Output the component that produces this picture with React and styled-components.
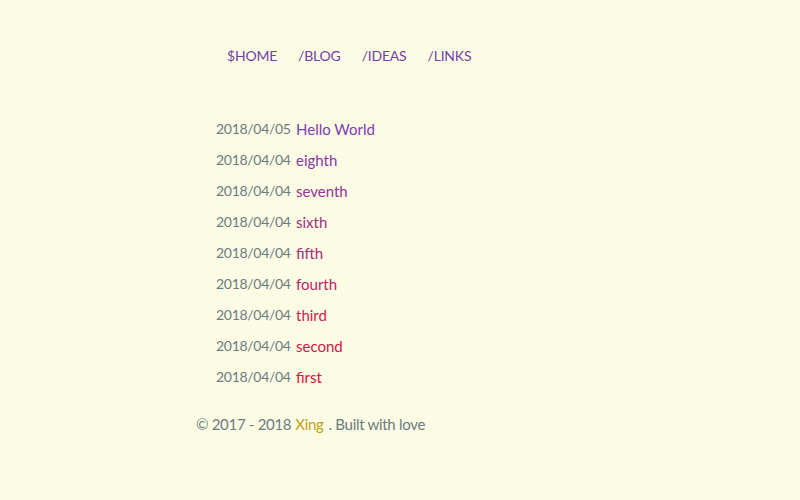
import React from 'react';
import styled, { createGlobalStyle } from 'styled-components';

// Global page styles
const GlobalStyle = createGlobalStyle`
  html, body {
    margin: 0;
    padding: 0;
    background: #fcfbe4;
  }
  body {
    font-family: "Lato", "Open Sans", sans-serif;
    font-size: 14px;
    letter-spacing: -0.3px;
    color: #6b7b82;
  }
`;

const Page = styled.div`
  width: 408px;
  margin: 0 auto;
  padding-top: 45px;
  display: flex;
  flex-direction: column;
`;

const Nav = styled.nav`
  display: flex;
  gap: 21px;
  padding-left: 31px;
  height: 20px;
  align-items: center;
  font-size: 14px;
  letter-spacing: -0.2px;
`;

const NavLink = styled.a`
  color: #7041a8;
  text-decoration: none;
`;

const PostList = styled.ul`
  list-style: none;
  margin: 48px 0 0;
  padding: 0 0 0 20px;
  display: flex;
  flex-direction: column;
`;

const PostRow = styled.li`
  display: flex;
  align-items: center;
  gap: 5px;
  height: 31px;
`;

const PostDate = styled.span`
  color: #6b7b82;
  width: 75px;
  white-space: nowrap;
`;

const PostTitle = styled.a`
  color: ${(p) => p.$color};
  text-decoration: none;
  font-size: 15px;
  letter-spacing: 0;
`;

const Footer = styled.footer`
  margin-top: 22px;
  height: 20px;
  display: flex;
  align-items: center;
  color: #6b7b82;
  white-space: pre;
  font-size: 15px;
  letter-spacing: -0.3px;
`;

const FooterLink = styled.a`
  color: #c29f12;
  text-decoration: none;
  margin: 0 5px 0 4px;
`;

// Posts data
const posts = [
  { date: '2018/04/05', title: 'Hello World' },
  { date: '2018/04/04', title: 'eighth' },
  { date: '2018/04/04', title: 'seventh' },
  { date: '2018/04/04', title: 'sixth' },
  { date: '2018/04/04', title: 'fifth' },
  { date: '2018/04/04', title: 'fourth' },
  { date: '2018/04/04', title: 'third' },
  { date: '2018/04/04', title: 'second' },
  { date: '2018/04/04', title: 'first' },
];

// purple -> crimson
const start = [0x7e, 0x3d, 0xb5];
const end = [0xe0, 0x10, 0x3a];
const colorAt = (i, n) => {
  const t = i / (n - 1);
  const c = start.map((s, k) => Math.round(s + (end[k] - s) * t));
  return `rgb(${c.join(',')})`;
};

const App = () => {
  return (
    <>
      <GlobalStyle />
      <Page>
        <Nav>
          <NavLink href="#">$HOME</NavLink>
          <NavLink href="#">/BLOG</NavLink>
          <NavLink href="#">/IDEAS</NavLink>
          <NavLink href="#">/LINKS</NavLink>
        </Nav>

        <PostList>
          {posts.map((post, i) => (
            <PostRow key={i}>
              <PostDate>{post.date}</PostDate>
              <PostTitle href="#" $color={colorAt(i, posts.length)}>
                {post.title}
              </PostTitle>
            </PostRow>
          ))}
        </PostList>

        <Footer>
          {'© 2017 - 2018'}
          <FooterLink href="#">Xing</FooterLink>
          {'. Built with love'}
        </Footer>
      </Page>
    </>
  );
};

export default App;
